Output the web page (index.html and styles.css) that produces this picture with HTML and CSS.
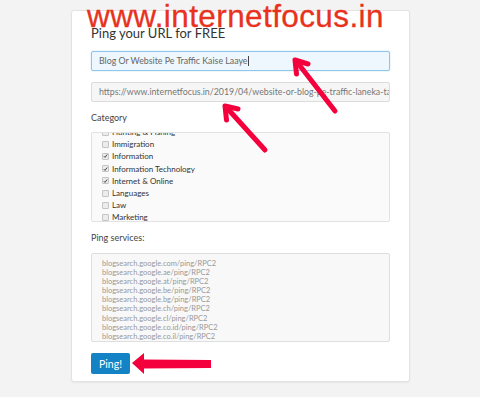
FILE: index.html
```html
<!DOCTYPE html>
<html>
<head>
<meta charset="utf-8">
<link rel="stylesheet" href="styles.css">
</head>
<body>
<div class="card">
  <h1 class="title">Ping your URL for FREE</h1>
  <div class="field field-focus"><span class="val">Blog Or Website Pe Traffic Kaise Laaye</span><span class="caret"></span></div>
  <div class="field field-url"><span class="val">https://www.internetfocus.in/2019/04/website-or-blog-pe-traffic-laneka-tarika</span></div>
  <div class="label label-cat">Category</div>
  <div class="catbox">
    <ul class="catlist">
      <li><span class="cb"></span>Hunting &amp; Fishing</li>
      <li><span class="cb"></span>Immigration</li>
      <li><span class="cb on"><svg viewBox="0 0 6 6"><path d="M1 3.2 L2.4 4.7 L5 1.2" /></svg></span>Information</li>
      <li><span class="cb on"><svg viewBox="0 0 6 6"><path d="M1 3.2 L2.4 4.7 L5 1.2" /></svg></span>Information Technology</li>
      <li><span class="cb on"><svg viewBox="0 0 6 6"><path d="M1 3.2 L2.4 4.7 L5 1.2" /></svg></span>Internet &amp; Online</li>
      <li><span class="cb"></span>Languages</li>
      <li><span class="cb"></span>Law</li>
      <li><span class="cb"></span>Marketing</li>
    </ul>
  </div>
  <div class="label label-ping">Ping services:</div>
  <div class="services">
    <div>blogsearch.google.com/ping/RPC2</div>
    <div>blogsearch.google.ae/ping/RPC2</div>
    <div>blogsearch.google.at/ping/RPC2</div>
    <div>blogsearch.google.be/ping/RPC2</div>
    <div>blogsearch.google.bg/ping/RPC2</div>
    <div>blogsearch.google.ch/ping/RPC2</div>
    <div>blogsearch.google.cl/ping/RPC2</div>
    <div>blogsearch.google.co.id/ping/RPC2</div>
    <div>blogsearch.google.co.il/ping/RPC2</div>
  </div>
  <button class="btn">Ping!</button>
</div>

<div class="watermark">www.internetfocus.in</div>

<svg class="arrows" width="480" height="397" viewBox="0 0 480 397">
  <g stroke="#f4003c" stroke-width="5" stroke-linecap="round" stroke-linejoin="round" fill="none">
    <line x1="297" y1="62" x2="335" y2="111"/>
    <polyline points="296.5,74 295,60 308,64"/>
    <line x1="227" y1="108" x2="265" y2="150"/>
    <polyline points="226.5,120 225,106 238,109"/>
  </g>
  <polygon fill="#f4003c" points="132,363 144,353 144,359.5 211,360 211,368 144,368.5 144,374"/>
</svg>
</body>
</html>
```
FILE: styles.css
```css
html, body {
  margin: 0;
  padding: 0;
}
body {
  width: 480px;
  height: 397px;
  background: #f3f3f3;
  font-family: Lato, "Open Sans", sans-serif;
  overflow: hidden;
  position: relative;
}
.card {
  box-sizing: border-box;
  margin: 10px 0 0 71px;
  width: 339px;
  height: 372px;
  background: #fff;
  border: 1px solid #e3e3e3;
  border-radius: 3px;
  box-shadow: 0 1px 2px rgba(0,0,0,0.06);
  padding: 14px 19px 0 19px;
}
.title {
  margin: 0;
  font-size: 13px;
  line-height: 16px;
  font-weight: 400;
  color: #333;
  height: 26px;
}
.field {
  box-sizing: border-box;
  height: 20px;
  border: 1px solid #dcdcdc;
  border-radius: 2px;
  background: #f6f6f6;
  padding: 0 7px;
  font-size: 8.8px;
  line-height: 18px;
  color: #666;
  white-space: nowrap;
  overflow: hidden;
  display: flex;
  align-items: center;
}
.field-focus {
  background: #eef7fd;
  border-color: #8ec6ec;
  box-shadow: 0 0 2px rgba(80,160,220,0.35);
  color: #666;
}
.field-url {
  margin-top: 11px;
  color: #777;
}
.caret {
  display: inline-block;
  width: 1px;
  height: 10px;
  background: #444;
}
.label {
  font-size: 9px;
  line-height: 12px;
  color: #444;
}
.label-cat {
  margin-top: 10px;
}
.catbox {
  box-sizing: border-box;
  margin-top: 8px;
  height: 90px;
  border: 1px solid #e2e2e2;
  border-radius: 2px;
  background: #fafafa;
  overflow: hidden;
}
.catlist {
  list-style: none;
  margin: -7px 0 0 0;
  padding: 0 0 0 10px;
}
.catlist li {
  display: flex;
  align-items: center;
  gap: 3px;
  height: 12.2px;
  font-size: 8px;
  color: #333;
}
.cb {
  box-sizing: border-box;
  width: 7px;
  height: 7px;
  border: 1px solid #c4c4c4;
  border-radius: 1px;
  background: #ececec;
  display: flex;
  align-items: center;
  justify-content: center;
}
.cb svg {
  width: 6px;
  height: 6px;
  fill: none;
  stroke: #333;
  stroke-width: 1.1;
}
.label-ping {
  margin-top: 10px;
}
.services {
  box-sizing: border-box;
  margin-top: 9px;
  height: 89px;
  border: 1px solid #dedede;
  border-radius: 2px;
  background: #f8f8f8;
  padding: 5px 10px 0 10px;
  font-size: 7.5px;
  line-height: 9.1px;
  color: #999;
  overflow: hidden;
}
.btn {
  display: block;
  margin-top: 11px;
  width: 39px;
  height: 21px;
  border: 0;
  border-radius: 2px;
  background: #1483c6;
  color: #fff;
  font-family: Lato, "Open Sans", sans-serif;
  font-size: 10.5px;
  padding: 0;
}
.watermark {
  position: absolute;
  left: 87px;
  top: -2px;
  font-family: "Liberation Sans", Arial, sans-serif;
  font-size: 31.5px;
  line-height: 36px;
  color: #e8321e;
  letter-spacing: 0.4px;
  white-space: nowrap;
  -webkit-text-stroke: 0.3px #e8321e;
}
.arrows {
  position: absolute;
  left: 0;
  top: 0;
  pointer-events: none;
}
```
